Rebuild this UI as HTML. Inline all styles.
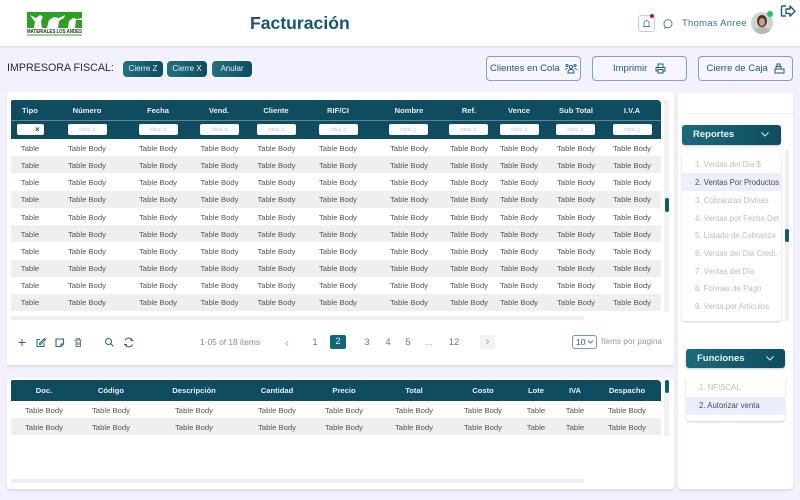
<!DOCTYPE html>
<html lang="es">
<head>
<meta charset="utf-8">
<title>Facturación</title>
<style>
*{box-sizing:border-box}
html,body{margin:0;padding:0}
body{width:800px;height:500px;position:relative;overflow:hidden;background:#f3f1fd;font-family:"Liberation Sans",sans-serif;color:#555}
div,span,svg{position:absolute}
.top{left:0;top:0;width:800px;height:46px;background:#fff;box-shadow:0 1px 2px #dcdae6}
.panel{background:#fff;border-radius:3px;box-shadow:0 2px 2px #dddbe6}
.pill{top:61px;height:16px;border-radius:4px;background:linear-gradient(90deg,#20727f,#0f4c60);color:#e8f2f4;font-size:8px;line-height:16px;text-align:center;box-shadow:0 0 2px #fff}
.bt{top:56px;width:95px;height:25px;border:1px solid #7fa3ba;border-radius:4px;background:#f6f5fe;color:#215a74;font-size:9.5px;line-height:23px;white-space:nowrap}
.hd{left:11px;width:650px;background:#0f4c60}
.sh{left:11px;width:650px;height:17px;background:#efeef0}
.c{top:0;width:80px;margin-left:-40px;text-align:center;white-space:nowrap}
.b .c{font-size:7.7px;line-height:17.15px;color:#555}
.h .c{font-size:7.6px;font-weight:bold;color:#e6f0f3;line-height:10px}
.f{top:124px;width:39px;height:11px;background:#fff;border-radius:2px;color:#bbb;font-size:4.5px;line-height:11px;text-align:center}
.m{left:695px;font-size:7.8px;line-height:10px;color:#bdbdc2;white-space:nowrap}
.p{font-size:9.5px;line-height:12px;color:#777;width:20px;margin-left:-10px;text-align:center;top:337px}
.dd{border-radius:3px;background:linear-gradient(90deg,#1c6a79,#0f4c60);color:#eef5f6;font-size:9.5px;font-weight:bold;line-height:20px;box-shadow:0 1px 2px #c9c9d4}
</style>
</head>
<body>
<div class="top"></div>

<!-- logo -->
<svg style="left:27px;top:12px" width="55" height="24" viewBox="0 0 55 24">
<rect width="55" height="16" fill="#2f9e23"/>
<path d="M3 3l6 3 4-3 3 2-2 4 1 7H7l1-6zM20 16l2-8 5-3 5 1 6-3-1 3-5 3-1 7zM41 16l1-7 4-3 4 1 5-1v2h-6l-1 8z" fill="#fff"/>
<rect y="16.5" width="55" height="5" fill="#fff"/>
<text x="0" y="21" font-family="Liberation Sans" font-size="5" font-weight="bold" fill="#1f2a1f" textLength="55" lengthAdjust="spacingAndGlyphs">MATERIALES LOS ANDES</text>
<rect y="22" width="55" height="2" fill="#9ccf92"/>
</svg>

<div style="left:250px;top:13px;font-size:17.6px;line-height:21px;font-weight:bold;color:#14566e;white-space:nowrap">Facturación</div>

<!-- top right -->
<div style="left:638px;top:15px;width:17px;height:17px;border:1px solid #b9d0dc;border-radius:3px"></div>
<svg style="left:641px;top:18px" width="11" height="11" viewBox="0 0 11 11" fill="none" stroke="#5d7f93" stroke-width=".9"><path d="M2 8.5h7M3 8.5V5a2.5 2.5 0 0 1 5 0v3.5"/></svg>
<div style="left:650px;top:14px;width:4px;height:4px;border-radius:50%;background:#c8102e"></div>
<svg style="left:663px;top:18px" width="11" height="11" viewBox="0 0 11 11" fill="none" stroke="#4f7186" stroke-width=".9"><path d="M2.2 8.6A4 4 0 1 1 4 9.6L1.6 10z"/></svg>
<div style="left:682px;top:17.500px;font-size:9.5px;line-height:12px;color:#41708c;white-space:nowrap;letter-spacing:.25px">Thomas Anree</div>
<div style="left:751px;top:12px;width:22px;height:22px;border-radius:50%;background:#cfd3cf;overflow:hidden">
  <div style="left:6px;top:3px;width:10px;height:12px;border-radius:50%;background:#4c3027"></div>
  <div style="left:8px;top:6px;width:6px;height:8px;border-radius:50%;background:#c99f88"></div>
  <div style="left:3px;top:15px;width:16px;height:10px;border-radius:50%;background:#aebab2"></div>
</div>
<div style="left:767px;top:11px;width:6px;height:6px;border-radius:50%;background:#1fc45a"></div>
<svg style="left:780px;top:4px" width="16" height="15" viewBox="0 0 16 15" fill="none" stroke="#1d5d74" stroke-width="1.4" stroke-linejoin="round"><path d="M6 2H2.5A1 1 0 0 0 1.500 3v8a1 1 0 0 0 1 1H6M6 5h4V2l5 5.300-5 5V9.500H6z"/></svg>

<!-- printer row -->
<div style="left:7px;top:61px;font-size:10.7px;line-height:15px;color:#2b2b2f;white-space:nowrap">IMPRESORA FISCAL:</div>
<div class="pill" style="left:123px;width:40px">Cierre Z</div>
<div class="pill" style="left:167px;width:40px">Cierre X</div>
<div class="pill" style="left:212px;width:40px">Anular</div>

<div class="bt" style="left:486px"><span style="left:3px;top:0">Clientes en Cola</span>
<svg style="left:78px;top:6px" width="12" height="11" viewBox="0 0 12 11" fill="none" stroke="#215a74" stroke-width=".9"><circle cx="6" cy="4" r="1.600"/><circle cx="2" cy="2.500" r="1.100"/><circle cx="10" cy="2.500" r="1.100"/><path d="M3 10V8.500a3 2 0 0 1 6 0V10zM.5 7a2 1.500 0 0 1 2-1.500M11.500 7a2 1.500 0 0 0-2-1.500"/></svg></div>
<div class="bt" style="left:592px"><span style="left:20px;top:0">Imprimir</span>
<svg style="left:62px;top:6px" width="11" height="11" viewBox="0 0 11 11" fill="none" stroke="#215a74" stroke-width="1"><path d="M3 4V1h5v3M3 8H1V4.500h9V8H8M3 6.500h5V10H3z"/></svg></div>
<div class="bt" style="left:698px"><span style="left:7.500px;top:0">Cierre de Caja</span>
<svg style="left:75px;top:6px" width="11" height="11" viewBox="0 0 11 11" fill="none" stroke="#215a74" stroke-width="1"><path d="M1 6h9v4H1zM2 6V3.500h5V6M3 3.500V1h3v2.500"/></svg></div>

<!-- panels -->
<div class="panel" style="left:7px;top:92px;width:667px;height:273px"></div>
<div class="panel" style="left:7px;top:378px;width:667px;height:111px"></div>
<div class="panel" style="left:678px;top:93px;width:115px;height:396px"></div>

<!-- table 1 -->
<div class="hd" style="top:100px;height:39px;border-radius:2px 4px 0 0"></div>
<div style="left:11px;top:120px;width:650px;height:1px;background:#5d8694"></div>
<div class="sh" style="top:156px"></div><div class="sh" style="top:191px"></div><div class="sh" style="top:225px"></div><div class="sh" style="top:260px"></div><div class="sh" style="top:294px"></div>
<div class="h" style="left:0;top:105.500px;width:0;height:0">
<div class="c" style="left:30px">Tipo</div><div class="c" style="left:87px">Número</div><div class="c" style="left:158px">Fecha</div><div class="c" style="left:219px">Vend.</div><div class="c" style="left:276px">Cliente</div><div class="c" style="left:338px">RIF/CI</div><div class="c" style="left:409px">Nombre</div><div class="c" style="left:469px">Ref.</div><div class="c" style="left:519px">Vence</div><div class="c" style="left:576px">Sub Total</div><div class="c" style="left:632px">I.V.A</div>
</div>
<div class="f" style="left:17px;width:27px"></div>
<div style="left:35px;top:124px;font-size:8px;line-height:11px;font-weight:bold;color:#14566e">×</div>
<div class="f" style="left:68px">Filtrar Q</div><div class="f" style="left:139px">Filtrar Q</div><div class="f" style="left:200px">Filtrar Q</div><div class="f" style="left:257px">Filtrar Q</div><div class="f" style="left:319px">Filtrar Q</div><div class="f" style="left:389px">Filtrar Q</div><div class="f" style="left:449px">Filtrar Q</div><div class="f" style="left:500px">Filtrar Q</div><div class="f" style="left:556px">Filtrar Q</div><div class="f" style="left:613px">Filtrar Q</div>

<div class="b" style="left:0;top:140px;width:0;height:0">
<div class="c" style="left:30px">Table<br>Table<br>Table<br>Table<br>Table<br>Table<br>Table<br>Table<br>Table<br>Table</div>
<div class="c" style="left:87px">Table Body<br>Table Body<br>Table Body<br>Table Body<br>Table Body<br>Table Body<br>Table Body<br>Table Body<br>Table Body<br>Table Body</div>
<div class="c" style="left:158px">Table Body<br>Table Body<br>Table Body<br>Table Body<br>Table Body<br>Table Body<br>Table Body<br>Table Body<br>Table Body<br>Table Body</div>
<div class="c" style="left:219.500px">Table Body<br>Table Body<br>Table Body<br>Table Body<br>Table Body<br>Table Body<br>Table Body<br>Table Body<br>Table Body<br>Table Body</div>
<div class="c" style="left:276.500px">Table Body<br>Table Body<br>Table Body<br>Table Body<br>Table Body<br>Table Body<br>Table Body<br>Table Body<br>Table Body<br>Table Body</div>
<div class="c" style="left:338px">Table Body<br>Table Body<br>Table Body<br>Table Body<br>Table Body<br>Table Body<br>Table Body<br>Table Body<br>Table Body<br>Table Body</div>
<div class="c" style="left:409px">Table Body<br>Table Body<br>Table Body<br>Table Body<br>Table Body<br>Table Body<br>Table Body<br>Table Body<br>Table Body<br>Table Body</div>
<div class="c" style="left:469px">Table Body<br>Table Body<br>Table Body<br>Table Body<br>Table Body<br>Table Body<br>Table Body<br>Table Body<br>Table Body<br>Table Body</div>
<div class="c" style="left:519px">Table Body<br>Table Body<br>Table Body<br>Table Body<br>Table Body<br>Table Body<br>Table Body<br>Table Body<br>Table Body<br>Table Body</div>
<div class="c" style="left:576px">Table Body<br>Table Body<br>Table Body<br>Table Body<br>Table Body<br>Table Body<br>Table Body<br>Table Body<br>Table Body<br>Table Body</div>
<div class="c" style="left:632px">Table Body<br>Table Body<br>Table Body<br>Table Body<br>Table Body<br>Table Body<br>Table Body<br>Table Body<br>Table Body<br>Table Body</div>
</div>

<!-- scrollbars table 1 -->
<div style="left:664px;top:100px;width:5px;height:212px;background:#f1f0f4"></div>
<div style="left:665px;top:198px;width:4px;height:14px;border-radius:2px;background:#0f5a6c"></div>
<div style="left:11px;top:316px;width:573px;height:4px;background:#f0eff3"></div>

<!-- toolbar -->
<svg style="left:17px;top:337px" width="120" height="11" viewBox="0 0 120 11" fill="none" stroke="#2c6580" stroke-width="1">
<path d="M1.500 5.500h7M5 2v7"/>
<path d="M23 2.500h-3v7h7V6M22.500 6.500l5-5 1 1-5 5h-1z"/>
<path d="M39 2h7.500v5l-2.500 2.500h-5zM44 9.500V7h2.500" stroke-width="1.100"/>
<path d="M57.500 3h7M59 3v6.500h4.500V3M60 3V1.500h2.500V3M60.300 5v3M62.200 5v3" stroke="#5f8497"/>
<circle cx="91.500" cy="4.500" r="3"/><path d="M94 7l2.500 2.500"/>
<path d="M108 3.500a4 4 0 0 1 7-.5M115.500 7.500a4 4 0 0 1-7 .5"/><path d="M114 1v2.500h2.500M109.500 10V7.500H107" stroke-width=".9"/>
</svg>
<div style="left:200px;top:336px;font-size:8.400px;line-height:12px;color:#8a8a8f;white-space:nowrap">1-05 of 18 items</div>
<div class="p" style="left:287px;color:#a9a9ae;font-size:12px">‹</div>
<div class="p" style="left:315px">1</div>
<div style="left:330px;top:335px;width:16px;height:14px;border-radius:2px;background:#14647a;color:#e6f1f4;font-size:9.500px;line-height:14px;text-align:center">2</div>
<div class="p" style="left:367px">3</div><div class="p" style="left:388px">4</div><div class="p" style="left:408px">5</div><div class="p" style="left:429px;color:#aaa">...</div><div class="p" style="left:454px">12</div>
<div style="left:480px;top:335px;width:15px;height:14px;border-radius:2px;background:#f2f1f6;color:#a5a5aa;font-size:12px;line-height:13px;text-align:center">›</div>
<div style="left:572px;top:335px;width:25px;height:14px;border:1px solid #6d9db2;border-radius:3px;color:#3a5f72;font-size:8.500px;line-height:12px;padding-left:3px">10</div>
<svg style="left:587px;top:339px" width="7" height="6" viewBox="0 0 7 6" fill="none" stroke="#4a6f82" stroke-width=".9"><path d="M1 1.500l2.500 2.500L6 1.500"/></svg>
<div style="left:601px;top:336px;font-size:8.200px;line-height:12px;color:#98989d;white-space:nowrap">Items por pagina</div>

<!-- table 2 -->
<div class="hd" style="top:380px;height:21px;border-radius:2px 4px 0 0"></div>
<div class="sh" style="top:418px"></div>
<div class="h" style="left:0;top:386px;width:0;height:0">
<div class="c" style="left:44px">Doc.</div><div class="c" style="left:111px">Código</div><div class="c" style="left:194px">Descripción</div><div class="c" style="left:277px">Cantidad</div><div class="c" style="left:344px">Precio</div><div class="c" style="left:414px">Total</div><div class="c" style="left:483px">Costo</div><div class="c" style="left:536px">Lote</div><div class="c" style="left:575px">IVA</div><div class="c" style="left:627px">Despacho</div>
</div>
<div class="b" style="left:0;top:401.500px;width:0;height:0">
<div class="c" style="left:44px">Table Body<br>Table Body</div><div class="c" style="left:111px">Table Body<br>Table Body</div><div class="c" style="left:194px">Table Body<br>Table Body</div><div class="c" style="left:277px">Table Body<br>Table Body</div><div class="c" style="left:344px">Table Body<br>Table Body</div><div class="c" style="left:414px">Table Body<br>Table Body</div><div class="c" style="left:483px">Table Body<br>Table Body</div><div class="c" style="left:536px">Table<br>Table</div><div class="c" style="left:575px">Table<br>Table</div><div class="c" style="left:627px">Table Body<br>Table Body</div>
</div>
<div style="left:664px;top:380px;width:5px;height:56px;background:#f1f0f4"></div>
<div style="left:665px;top:380px;width:4px;height:13px;border-radius:2px;background:#0f5a6c"></div>
<div style="left:11px;top:479px;width:573px;height:4px;background:#f0eff3"></div>

<!-- right column -->
<div style="left:688px;top:113px;width:105px;height:1px;background:#f0eff4"></div>
<div class="dd" style="left:682px;top:125px;width:99px;height:20px;padding-left:11px">Reportes</div>
<svg style="left:760px;top:131px" width="10" height="8" viewBox="0 0 10 8" fill="none" stroke="#dfeef0" stroke-width="1"><path d="M1.500 1.500L5 5l3.500-3.500"/></svg>
<div style="left:682px;top:151px;width:99px;height:170px;background:#fff;border-radius:3px;box-shadow:0 1px 2px #cfced8"></div>
<div style="left:682px;top:173px;width:99px;height:18px;background:#eceefb"></div>
<div class="m" style="top:159.500px">1. Ventas del Día $</div>
<div class="m" style="top:177.500px;color:#4c4c52">2. Ventas Por Productos</div>
<div class="m" style="top:195.500px">3. Cobranzas Divisas</div>
<div class="m" style="top:213.500px">4. Ventas por Fecha Det</div>
<div class="m" style="top:231px">5. Listado de Cobranza</div>
<div class="m" style="top:248.500px">6. Ventas del Día Credi.</div>
<div class="m" style="top:266.500px">7. Ventas del Día</div>
<div class="m" style="top:283.500px">8. Formas de Pago</div>
<div class="m" style="top:301.500px">9. Venta por Artículos</div>
<div style="left:785px;top:150px;width:4px;height:171px;background:#efeef3"></div>
<div style="left:785px;top:229px;width:4px;height:13px;border-radius:2px;background:#0f5a6c"></div>

<div class="dd" style="left:686px;top:349px;width:99px;height:19px;padding-left:11px;line-height:19px">Funciones</div>
<svg style="left:765px;top:355px" width="10" height="8" viewBox="0 0 10 8" fill="none" stroke="#dfeef0" stroke-width="1"><path d="M1.500 1.500L5 5l3.500-3.500"/></svg>
<div style="left:686px;top:376px;width:99px;height:45px;background:#fff;border-radius:3px;box-shadow:0 1px 2px #cfced8"></div>
<div style="left:686px;top:397px;width:99px;height:18px;background:#eceefb"></div>
<div class="m" style="left:699px;top:383px">1. NFISCAL</div>
<div class="m" style="left:699px;top:401px;color:#4c4c52">2. Autorizar venta</div>
</body>
</html>
